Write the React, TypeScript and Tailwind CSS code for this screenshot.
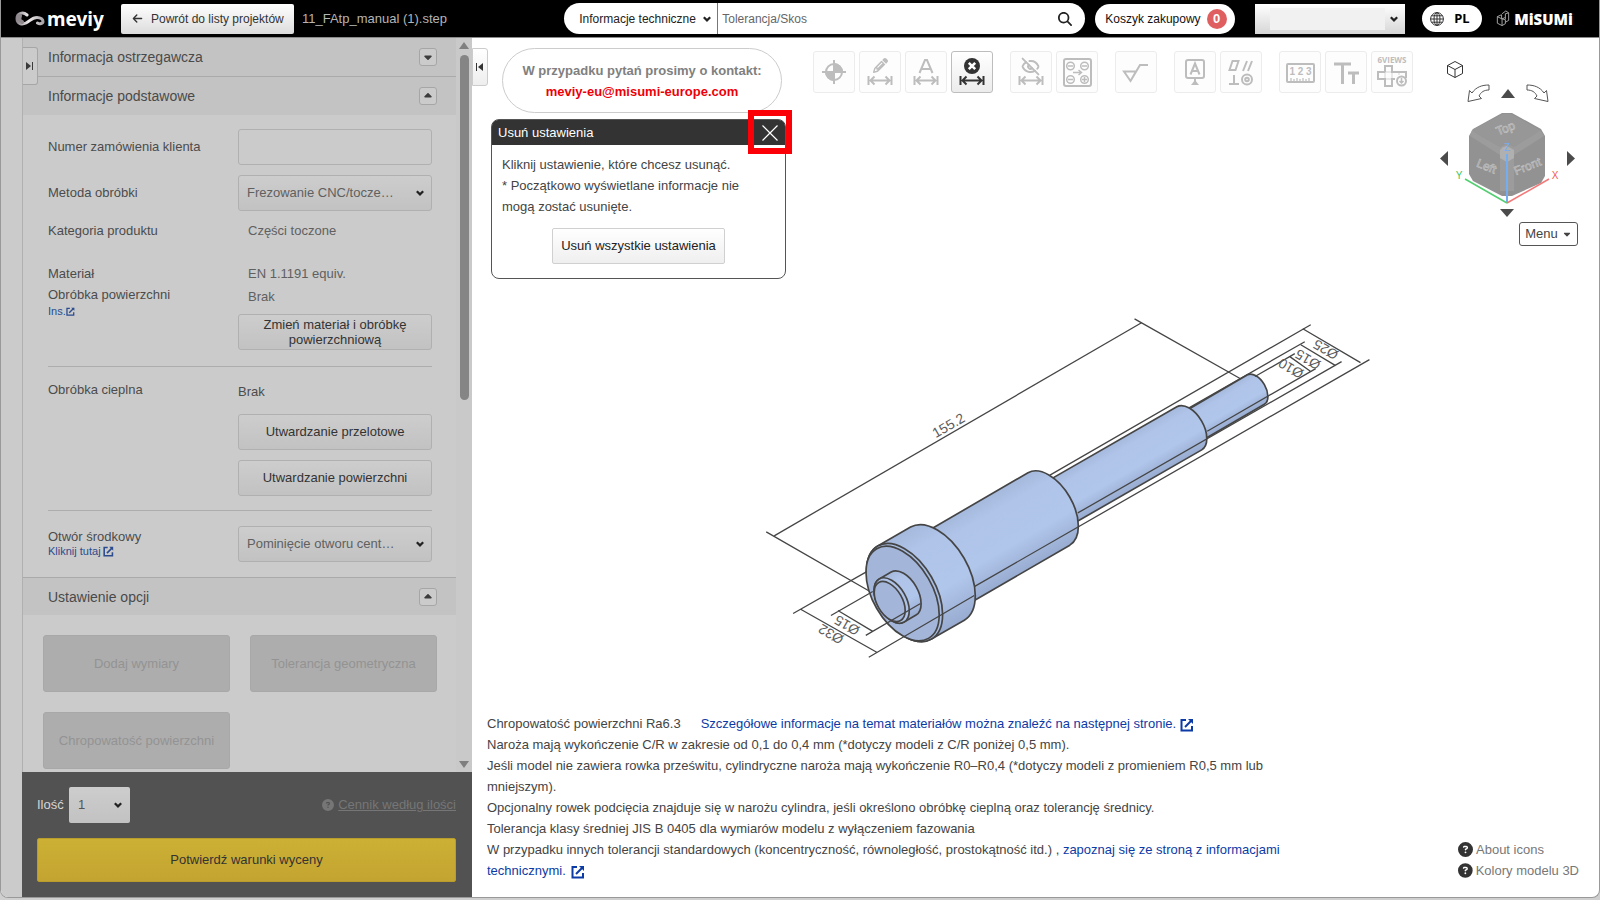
import { useState } from "react";
import type { ReactNode } from "react";
import clsx from "clsx";
import { EyeOff } from "lucide-react";
import {
  FaArrowLeft,
  FaCaretDown,
  FaCaretUp,
  FaCircleQuestion,
  FaMagnifyingGlass,
  FaPencil,
} from "react-icons/fa6";

const panelControl =
  "border border-[#b0b0b0] rounded-[3px] bg-linear-to-b from-[#cdcdcd] to-[#c2c2c2] text-[13px]";

function ExternalIcon({ className }: { className?: string }) {
  return (
    <svg viewBox="0 0 14 14" className={clsx("inline-block", className)} fill="none" stroke="currentColor" strokeWidth="2">
      <path d="M6 2H1.5v10.5H12V8" />
      <path d="M5 9l7-7" />
      <path d="M8 1h5v5z" fill="currentColor" stroke="none" />
    </svg>
  );
}

function Chevron({ className }: { className?: string }) {
  return (
    <svg viewBox="0 0 8 8" className={clsx("pointer-events-none absolute size-2", className)} fill="none" stroke="#222" strokeWidth="2.2">
      <path d="M.8 2.200L4 5.400l3.200-3.200" />
    </svg>
  );
}

/* ---------- Header ---------- */

function Header() {
  return (
    <header className="flex h-[38px] shrink-0 items-center border-b border-[#8a8a8a] bg-black pl-[14px] pr-[26px] text-xs">
      <a href="#" className="flex w-[92px] items-center text-white" aria-label="meviy">
        <svg viewBox="0 0 30 16" className="h-4 w-[30px] shrink-0" fill="none" strokeLinecap="round">
          <defs>
            <linearGradient id="loop" x1="0" x2="1">
              <stop offset="0" stopColor="#8d878d" />
              <stop offset="0.45" stopColor="#f2eef0" />
              <stop offset="1" stopColor="#a9a4a8" />
            </linearGradient>
          </defs>
          <path
            d="M12 4C8 .5 2 2 2 7.500S7 14 11 12C15 10 17 6.500 22 6.500c4 0 6 2 6 4s-3 3-5.500 1.500"
            stroke="url(#loop)"
            strokeWidth="3"
          />
          <path d="M5 5c-1 2-1 5 2 6" stroke="#8f898e" strokeWidth="4" />
        </svg>
        <span className="ml-[2px] font-['Noto_Sans'] text-[19px] leading-5 font-bold">meviy</span>
      </a>
      <button className="ml-[14px] flex h-[30px] w-[173px] shrink-0 items-center rounded-[2px] bg-linear-to-b from-white to-[#dcdcdc] pl-[11px] text-[#333]">
        <FaArrowLeft className="mr-2 size-[11px]" />
        Powrót do listy projektów
      </button>
      <span className="ml-2 text-[13px] whitespace-nowrap text-[#b5b5b5]">11_FAtp_manual (1).step</span>

      <div className="ml-auto flex h-[31px] w-[521px] items-center overflow-hidden rounded-full bg-white">
        <div className="relative flex h-full w-[154px] items-center border-r border-[#777]">
          <select aria-label="Kategoria wyszukiwania" className="h-full w-full appearance-none pl-[15px] text-[#222]">
            <option>Informacje techniczne</option>
          </select>
          <Chevron className="right-[6px]" />
        </div>
        <input aria-label="Szukaj" placeholder="Tolerancja/Skos" className="h-full flex-1 pl-1 placeholder-[#666] outline-none" />
        <button aria-label="Szukaj" className="mr-[13px]">
          <FaMagnifyingGlass className="size-[14px] text-[#222]" />
        </button>
      </div>

      <button className="ml-[10px] flex h-[30px] w-[140px] items-center gap-[6px] rounded-full bg-white pl-[10px] whitespace-nowrap text-[#111]">
        Koszyk zakupowy
        <span className="flex size-5 items-center justify-center rounded-full bg-[#df5f60] text-[13px] font-bold text-white">0</span>
      </button>

      <div className="relative ml-5 flex h-[30px] w-[150px] items-center bg-linear-to-b from-white to-[#d6d6d6] pl-[15px]">
        <span className="h-[22px] w-[115px] bg-[#f1f1f1]" />
        <select aria-label="Konto" className="absolute inset-0 appearance-none" />
        <Chevron className="right-[7px]" />
      </div>

      <button className="ml-[17px] flex h-[27px] w-[60px] items-center rounded-full bg-white pl-2 font-['Noto_Sans'] text-[13px] font-bold text-black">
        <svg viewBox="0 0 14 14" className="mr-[10px] size-[14px]" fill="none" stroke="#333" strokeWidth="1">
          <circle cx="7" cy="7" r="6.400" />
          <ellipse cx="7" cy="7" rx="3" ry="6.400" />
          <path d="M7 .5v13M.5 7h13M1.500 3.800h11M1.500 10.200h11" />
        </svg>
        PL
      </button>

      <a href="#" className="ml-[14px] flex items-center text-white" aria-label="MiSUMi">
        <svg viewBox="0 0 14 18" className="mr-1 h-[17px] w-[14px]" fill="none" stroke="#aaa" strokeWidth="1">
          <path d="M1 7l4.500-2v4l4 1.500v4L6 16.500 1 14zM1 7l5 2.500v7M6 9.500l3-1.500M6 4l4-3 3 2v8l-3.500 2M9.500 4l3.500-1M9.500 4v6" />
        </svg>
        <span className="font-['Open_Sans'] text-[15px] leading-5 font-extrabold">MiSUMi</span>
      </a>
    </header>
  );
}

/* ---------- Left panel ---------- */

function SectionHeader({ title, open, className }: { title: string; open: boolean; className?: string }) {
  const Caret = open ? FaCaretUp : FaCaretDown;
  return (
    <div className={clsx("flex items-center justify-between border-[#aaa] bg-[#c3c3c3] pr-[19px] pl-[25px]", className)}>
      <h2 className="text-sm text-[#4a4a4a]">{title}</h2>
      <button aria-label={title} className="flex size-[18px] items-center justify-center rounded-[3px] border border-[#a6a6a6] bg-[#cbcbcb] text-[#3c3c3c]">
        <Caret className="size-3" />
      </button>
    </div>
  );
}

function PanelSelect({ id, value }: { id: string; value: string }) {
  return (
    <div className="relative flex w-[194px] items-center">
      <select id={id} className={clsx(panelControl, "h-9 w-full appearance-none pl-2 text-[#606060]")}>
        <option>{value}</option>
      </select>
      <Chevron className="right-2" />
    </div>
  );
}

function OptionButton({ children }: { children: ReactNode }) {
  return (
    <button disabled className="h-[57px] w-[187px] rounded-[3px] border border-[#a8a8a8] bg-[#adadad] text-[13px] text-[#939393]">
      {children}
    </button>
  );
}

function Sidebar() {
  const [orderNo, setOrderNo] = useState("");

  return (
    <aside className="flex w-[471px] shrink-0 bg-[#cbcbcb] pl-[21px] text-[13px] text-[#4c4c4c]">
      <div className="flex min-w-0 flex-1 flex-col">
        <div className="flex min-h-0 flex-1 border-l border-[#b0b0b0]">
          <div className="relative min-w-0 flex-1 overflow-hidden">
            <SectionHeader title="Informacja ostrzegawcza" open={false} className="h-[39px] border-b" />
            <SectionHeader title="Informacje podstawowe" open className="h-[38px]" />
            <button aria-label="Rozwiń panel" className="absolute top-[9px] left-0 flex h-[38px] w-[15px] items-center justify-center rounded-r-[3px] border border-l-0 border-[#a6a6a6] bg-[#cbcbcb]">
              <svg viewBox="0 0 8 8" className="size-2" fill="#3a3a3a"><path d="M0 0l5 4-5 4zM6 0h1v8H6z" /></svg>
            </button>

            <div className="mr-6 ml-[25px] flex flex-col">
              <div className="mt-[14px] flex items-center justify-between">
                <label htmlFor="order">Numer zamówienia klienta</label>
                <input
                  id="order"
                  value={orderNo}
                  onChange={(e) => setOrderNo(e.target.value)}
                  className="h-9 w-[194px] rounded-[3px] border border-[#b0b0b0] px-2"
                />
              </div>
              <div className="mt-[10px] flex items-center justify-between">
                <label htmlFor="method">Metoda obróbki</label>
                <PanelSelect id="method" value="Frezowanie CNC/tocze…" />
              </div>
              <div className="mt-[10px] flex h-5 items-center">
                <span className="w-[200px]">Kategoria produktu</span>
                <span className="text-[#606060]">Części toczone</span>
              </div>
              <div className="mt-[23px] flex h-5 items-center">
                <span className="w-[200px]">Materiał</span>
                <span className="text-[#606060]">EN 1.1191 equiv.</span>
              </div>
              <div className="mt-[2px] flex items-start justify-between">
                <div className="flex flex-col">
                  <span className="leading-[18px]">Obróbka powierzchni</span>
                  <a href="#" className="flex items-center text-[11px] leading-[14px] text-[#2b4b8e]">
                    Ins.<ExternalIcon className="size-[9px]" />
                  </a>
                </div>
                <div className="flex w-[194px] flex-col">
                  <span className="pl-[10px] leading-[22px] text-[#606060]">Brak</span>
                  <button className={clsx(panelControl, "mt-[6px] h-9 leading-[15px] text-[#333]")}>
                    Zmień materiał i obróbkę
                    <br />
                    powierzchniową
                  </button>
                </div>
              </div>

              <hr className="mt-4 border-[#adadad]" />

              <div className="mt-[15px] flex items-start justify-between">
                <span className="leading-4">Obróbka cieplna</span>
                <div className="flex w-[194px] flex-col">
                  <span className="leading-5">Brak</span>
                  <button className={clsx(panelControl, "mt-3 h-9 text-[#333]")}>Utwardzanie przelotowe</button>
                  <button className={clsx(panelControl, "mt-[10px] h-9 text-[#333]")}>Utwardzanie powierzchni</button>
                </div>
              </div>

              <hr className="mt-[14px] border-[#adadad]" />

              <div className="mt-[15px] mb-[15px] flex items-center justify-between">
                <div className="flex flex-col">
                  <label htmlFor="centre" className="leading-[14px]">Otwór środkowy</label>
                  <a href="#" className="flex items-center gap-[2px] text-[11px] leading-[14px] text-[#2b4b8e]">
                    Kliknij tutaj<ExternalIcon className="size-[11px]" />
                  </a>
                </div>
                <PanelSelect id="centre" value="Pominięcie otworu cent…" />
              </div>
            </div>

            <SectionHeader title="Ustawienie opcji" open className="h-[38px] border-t" />
            <div className="flex flex-wrap gap-x-5 gap-y-5 pt-5 pl-5">
              <OptionButton>Dodaj wymiary</OptionButton>
              <OptionButton>Tolerancja geometryczna</OptionButton>
              <OptionButton>Chropowatość powierzchni</OptionButton>
            </div>
          </div>

          {/* Scrollbar */}
          <div className="flex w-4 shrink-0 flex-col items-center bg-[#c9c9c9] py-1">
            <svg viewBox="0 0 10 7" className="h-[7px] w-[10px]" fill="#7f7f7f"><path d="M5 0l5 7H0z" /></svg>
            <div className="mt-[6px] h-[345px] w-[9px] rounded-full bg-[#858585]" />
            <svg viewBox="0 0 10 7" className="mt-auto h-[7px] w-[10px]" fill="#7f7f7f"><path d="M0 0h10L5 7z" /></svg>
          </div>
        </div>

        <div className="bg-[#525252] pt-[15px] pr-4 pb-[15px] pl-[15px]">
          <div className="flex items-center">
            <label htmlFor="qty" className="w-8 text-[#d6d6d6]">Ilość</label>
            <div className="relative flex items-center">
              <select id="qty" className="h-9 w-[61px] appearance-none rounded-[2px] bg-linear-to-b from-[#cdcdcd] to-[#c2c2c2] pl-[9px] text-[#555]">
                <option>1</option>
              </select>
              <Chevron className="right-2" />
            </div>
            <a href="#" className="ml-auto flex items-center gap-1 text-[#767676]">
              <FaCircleQuestion className="size-3" />
              <span className="underline">Cennik według ilości</span>
            </a>
          </div>
          <button className="mt-[15px] h-11 w-full rounded-[2px] border border-[#b89c2c] bg-linear-to-b from-[#ccb034] to-[#c3a431] text-[#333]">
            Potwierdź warunki wyceny
          </button>
        </div>
      </div>
    </aside>
  );
}

/* ---------- Toolbar ---------- */

function Tool({ label, active, children }: { label: string; active?: boolean; children: ReactNode }) {
  return (
    <button
      aria-label={label}
      className={clsx(
        "size-[42px] rounded-[3px] border",
        active ? "border-[#bdbdbd] bg-linear-to-b from-white to-[#ececec] text-[#333]" : "border-[#ececec] bg-[#fdfdfd] text-[#bdbdbd]",
      )}
    >
      <svg viewBox="1 1 40 40" className="size-10" fill="none" stroke="currentColor" strokeWidth="2">
        {children}
      </svg>
    </button>
  );
}

const DimensionArrow = () => <path d="M9.500 25v9M32.500 25v9M11 29.500h20M15.500 25.500l-4 4 4 4M26.500 25.500l4 4-4 4" />;

function Toolbar() {
  return (
    <div className="ml-[27px] flex gap-[17px] pt-[3px]">
      <div className="flex gap-1">
        <Tool label="Punkt odniesienia">
          <circle cx="21" cy="21" r="8" />
          <path d="M21 21V13a8 8 0 0 1 8 8zM21 21v8a8 8 0 0 1-8-8z" fill="currentColor" />
          <path d="M21 9v24M9 21h24" />
        </Tool>
        <Tool label="Edytuj wymiar">
          <FaPencil x="14" y="7" size={15} stroke="none" fill="currentColor" />
          <DimensionArrow />
        </Tool>
        <Tool label="Tekst wymiaru">
          <path d="M14.500 22L20 9h2l5.500 13M17 18h8" />
          <DimensionArrow />
        </Tool>
        <Tool label="Usuń ustawienia" active>
          <circle cx="21" cy="15" r="8" fill="currentColor" stroke="none" />
          <path d="M17.800 11.800l6.400 6.400M24.200 11.800l-6.400 6.400" stroke="#fff" strokeWidth="2.600" />
          <DimensionArrow />
        </Tool>
      </div>
      <div className="flex gap-1">
        <Tool label="Ukryj wymiary">
          <EyeOff x="11" y="6" size={19} strokeWidth={2.4} />
          <DimensionArrow />
        </Tool>
        <Tool label="Grupuj otwory">
          <rect x="8" y="8" width="27" height="27" rx="2" />
          <circle cx="14.500" cy="15" r="3.800" strokeWidth="1.500" />
          <circle cx="28.500" cy="15" r="3.800" strokeWidth="1.500" />
          <circle cx="14.500" cy="28.500" r="3.800" strokeWidth="1.500" />
          <circle cx="28.500" cy="28.500" r="3.800" strokeWidth="1.500" />
          <path d="M12 15h5M26 15h5M12 28.500h5M26 28.500h5M28.500 26v5M17 21.500h8M22.500 19l3 2.500-3 2.500" strokeWidth="1.500" />
        </Tool>
      </div>
      <Tool label="Chropowatość">
        <path d="M9 20.500h12L15.500 30zM15.500 30l9.500-16h8" />
      </Tool>
      <div className="flex gap-1">
        <Tool label="Baza">
          <rect x="12" y="9" width="18" height="18" rx="2" />
          <path d="M16.500 23.500L21 12.500l4.500 11M18 20h6M21 27v5" />
          <path d="M17 34l4-5 4 5z" fill="currentColor" stroke="none" />
        </Tool>
        <Tool label="Tolerancja geometryczna">
          <path d="M9.500 19l3-9h6l-3 9zM23 20l4-10M28 20l4-10M9 33h10M14 24v9" />
          <circle cx="27" cy="28.500" r="5" />
          <circle cx="27" cy="28.500" r="1.800" />
        </Tool>
      </div>
      <div className="flex gap-1">
        <Tool label="Wymiary liczbowe">
          <rect x="8" y="13" width="27" height="18" rx="1" />
          <text x="21.500" y="24" textAnchor="middle" fontSize="10" fontWeight="bold" fill="currentColor" stroke="none">1 2 3</text>
          <path d="M12 30v-3M15 30v-2M18 30v-3M21 30v-2M24 30v-3M27 30v-2M30 30v-3" strokeWidth="1.200" />
        </Tool>
        <Tool label="Rozmiar tekstu">
          <path d="M9 13h17M17.500 13v20M23 22h11M28.500 22v11" strokeWidth="3" />
        </Tool>
        <Tool label="Sześć widoków">
          <text x="21" y="12" textAnchor="middle" fontSize="8" fontWeight="bold" fill="currentColor" stroke="none" className="font-['Open_Sans']">6VIEWS</text>
          <path d="M14 21v-6h7v6h14v6M24 28h-3v7h-7v-7H7v-7h7" />
          <path d="M14 21h7v7h-7zM28 21v3" strokeWidth="0.600" />
          <circle cx="30.500" cy="30" r="4.500" />
          <path d="M30.500 27v4M28.500 30l2 2 2-2" strokeWidth="1.500" />
        </Tool>
      </div>
    </div>
  );
}

/* ---------- View cube ---------- */

function Triangle({ label, d, className }: { label: string; d: string; className: string }) {
  return (
    <button aria-label={label}>
      <svg viewBox="0 0 16 16" preserveAspectRatio="none" className={className} fill="#4b4b4b"><path d={d} /></svg>
    </button>
  );
}

function ViewCube() {
  return (
    <nav className="mr-[21px] ml-auto flex w-[138px] flex-col pt-3">
      <button aria-label="Widok izometryczny" className="ml-[6px] size-[18px]">
        <svg viewBox="0 0 18 18" className="size-[18px]" fill="none" stroke="#333" strokeWidth="1">
          <path d="M9 1.500l7.500 4v8L9 17.500l-7.500-4v-8zM1.500 5.500L9 9.500l7.500-4M9 9.500v8" />
        </svg>
      </button>
      <div className="mt-[6px] flex items-center gap-[11px] pl-[27px]">
        <button aria-label="Obróć w lewo">
          <svg viewBox="0 0 23 18" className="h-[18px] w-[23px]" fill="none" stroke="#555">
            <path d="M22 1v5c-5 0-8 2-10 6l2.500 2.500L1 17.500 2.500 6.500 5 9C9 3 15 1 22 1z" />
          </svg>
        </button>
        <Triangle label="W górę" d="M8 0l8 16H0z" className="h-[9px] w-[14px]" />
        <button aria-label="Obróć w prawo">
          <svg viewBox="0 0 23 18" className="h-[18px] w-[23px]" fill="none" stroke="#555">
            <path d="M1 1v5c5 0 8 2 10 6l-2.500 2.500L22 17.500 20.500 6.500 18 9C14 3 8 1 1 1z" />
          </svg>
        </button>
      </div>
      <div className="mt-2 mr-[3px] flex items-center justify-between">
        <Triangle label="W lewo" d="M16 0v16L0 8z" className="h-[15px] w-2" />
        <svg viewBox="1456 110 106 96" className="h-[96px] w-[106px]">
          <path d="M1503 113h10l29 16 4 7v40l-4 7-29 13h-10l-29-15-4-7v-38l4-7z" fill="#929292" />
          <path d="M1504 114h8l29 16-5 4-21 13-7-4-7 4-23-13-5-4z" fill="#979797" />
          <path d="M1473 130l5 4 23 13 7-4 7 4 21-13 5-4 4 6-30 19v36h-14v-36l-30-19z" fill="#9c9c9c" />
          <path d="M1504 147l4-1 7 4v8l-7 4-7-4v-8z" fill="#b0b0b0" />
          <g fill="none" stroke="#c2c2c2" strokeWidth="0.600" fontSize="12" textAnchor="middle">
            <text transform="translate(1508 132) rotate(-22)">Top</text>
            <text transform="translate(1486 170) rotate(22)">Left</text>
            <text transform="translate(1530 170) rotate(-22)">Front</text>
          </g>
          <path d="M1508 203v-49" stroke="#74aef0" strokeWidth="2" />
          <path d="M1508 203l-42-24" stroke="#52cf70" strokeWidth="1.500" />
          <path d="M1508 203l42-24" stroke="#f47878" strokeWidth="1.500" />
          <g fontSize="10" textAnchor="middle">
            <text x="1508" y="151" fill="#74aef0">Z</text>
            <text x="1460" y="179" fill="#3cc75e">Y</text>
            <text x="1556" y="179" fill="#f25c5c">X</text>
          </g>
        </svg>
        <Triangle label="W prawo" d="M0 0l16 8L0 16z" className="h-[15px] w-2" />
      </div>
      <div className="mt-[3px] mr-1 flex h-2 justify-center">
        <Triangle label="W dół" d="M0 0h16L8 16z" className="block h-2 w-[14px]" />
      </div>
      <button className="mt-[5px] ml-auto flex h-6 w-[59px] items-center justify-center gap-1 rounded-[3px] border border-[#555] text-[13px] text-[#444]">
        Menu <FaCaretDown className="size-[10px]" />
      </button>
    </nav>
  );
}

/* ---------- Turned part drawing ---------- */

// The axis runs at -30deg; an end circle of semi-axis a appears as an
// ellipse (a, a / sqrt 3) turned by 60deg.
const flat = (a: number) => a * 0.577;

function Cylinder({ from, to, a }: { from: number[]; to: number[]; a: number }) {
  const dx = a * 0.5;
  const dy = a * 0.866;
  const b = flat(a);
  const d = `M${to[0] + dx} ${to[1] + dy}A${a} ${b} 60 0 0 ${to[0] - dx} ${to[1] - dy}L${from[0] - dx} ${from[1] - dy}A${a} ${b} 60 0 0 ${from[0] + dx} ${from[1] + dy}Z`;
  const id = `shade-${a}-${from[0]}`;
  return (
    <>
      <linearGradient id={id} gradientUnits="userSpaceOnUse" x1={from[0] - dx} y1={from[1] - dy} x2={from[0] + dx} y2={from[1] + dy}>
        <stop offset="0" stopColor="#a5b9dd" />
        <stop offset="0.2" stopColor="#afc4e8" />
        <stop offset="0.65" stopColor="#b0c6ea" />
        <stop offset="1" stopColor="#98abd0" />
      </linearGradient>
      <path d={d} fill={`url(#${id})`} />
    </>
  );
}

function Disc({ at, a, fill }: { at: number[]; a: number; fill: string }) {
  return <ellipse rx={a} ry={flat(a)} fill={fill} transform={`translate(${at[0]} ${at[1]}) rotate(60)`} />;
}

const dimensionLabels = [
  { text: "155.2", x: 948, y: 426, angle: -30 },
  { text: "Ø25", x: 1327, y: 350, angle: 210 },
  { text: "Ø15", x: 1309, y: 360, angle: 210 },
  { text: "Ø10", x: 1292, y: 369, angle: 210 },
  { text: "Ø15", x: 846, y: 627, angle: 210 },
  { text: "Ø32", x: 830, y: 636, angle: 210 },
];

function PartDrawing() {
  return (
    <svg viewBox="472 279 1127 436" className="min-h-0 w-full flex-1" role="img" aria-label="Model 3D">
      <g stroke="#454545" strokeWidth="1.700" strokeLinejoin="round">
        <path d="M871 594L765 533M1241 379L1135 319M1306 342L1180 414M1312 325L1050 476" fill="none" strokeWidth="1.300" />
        <Cylinder from={[1190, 429]} to={[1257, 390]} a={17} />
        <Cylinder from={[1049, 510]} to={[1190, 429]} a={25} />
        <Cylinder from={[937, 575]} to={[1049, 510]} a={42} />
        <Cylinder from={[904, 594]} to={[937, 575]} a={54} />
        <Disc at={[904, 594]} a={54} fill="#a9bde1" />
        <Disc at={[902, 595]} a={52} fill="#a3b6da" />
        <Cylinder from={[891, 602]} to={[903, 595]} a={25} />
        <Disc at={[891, 602]} a={25} fill="#aec3e7" />
        <Disc at={[889, 603]} a={22} fill="#a3b6da" />
      </g>
      <g stroke="#454545" strokeWidth="1.300" fill="none">
        <path d="M773 537L1142 323" />
        <path d="M1304 329L1362 363M1371 360L974 588" />
        <path d="M1302 345L1337 366M1343 362L1078 514" />
        <path d="M1291 357L1312 372M1296 354L1256 377M1317 369L1208 432" />
        <path d="M800 611L876 654M792 615L866 573M868 659L974 597" />
        <path d="M837 612L872 633M830 617L872 593M865 637L920 605" />
      </g>
      <g fill="#5c5c5c" fontSize="14" textAnchor="middle">
        {dimensionLabels.map((l) => (
          <text key={`${l.text}-${l.x}`} dy="5" transform={`translate(${l.x} ${l.y}) rotate(${l.angle})`}>
            {l.text}
          </text>
        ))}
      </g>
    </svg>
  );
}

/* ---------- Viewer ---------- */

function DeleteDialog({ onClose }: { onClose: () => void }) {
  return (
    <div role="dialog" aria-labelledby="dialog-title" className="relative mt-[6px] h-[160px] rounded-lg border border-[#555] bg-white text-[13px] text-[#444]">
      <div className="flex h-[25px] items-center justify-between rounded-t-[6px] bg-[#333] pr-[7px] pl-[6px]">
        <h2 id="dialog-title" className="text-white">Usuń ustawienia</h2>
        <button aria-label="Zamknij" onClick={onClose}>
          <svg viewBox="0 0 16 16" className="size-4" stroke="#fff" strokeWidth="1.200"><path d="M.5.5l15 15M15.500.5l-15 15" /></svg>
        </button>
      </div>
      <p className="pt-[9px] pr-8 pl-[10px] leading-[21px]">
        Kliknij ustawienie, które chcesz usunąć.
        <br />* Początkowo wyświetlane informacje nie mogą zostać usunięte.
      </p>
      <button className="mx-auto mt-[11px] block h-9 w-[173px] rounded-[2px] border border-[#d0d0d0] bg-linear-to-b from-white to-[#efefef] text-[#222]">
        Usuń wszystkie ustawienia
      </button>
      <div className="pointer-events-none absolute -top-[10px] -right-[7px] size-11 border-6 border-[#fb0007]" />
    </div>
  );
}

function Notes() {
  return (
    <footer className="flex shrink-0 items-end justify-between pr-5 pb-4 pl-[15px] text-[13px]">
      <div className="w-[800px] leading-[21px] text-[#444]">
        <p>
          <span className="mr-5">Chropowatość powierzchni Ra6.3</span>
          <a href="#" className="text-[#0c3ba5]">
            Szczegółowe informacje na temat materiałów można znaleźć na następnej stronie. <ExternalIcon className="size-[14px]" />
          </a>
        </p>
        <p>Naroża mają wykończenie C/R w zakresie od 0,1 do 0,4 mm (*dotyczy modeli z C/R poniżej 0,5 mm).</p>
        <p>Jeśli model nie zawiera rowka prześwitu, cylindryczne naroża mają wykończenie R0–R0,4 (*dotyczy modeli z promieniem R0,5 mm lub mniejszym).</p>
        <p>Opcjonalny rowek podcięcia znajduje się w narożu cylindra, jeśli określono obróbkę cieplną oraz tolerancję średnicy.</p>
        <p>Tolerancja klasy średniej JIS B 0405 dla wymiarów modelu z wyłączeniem fazowania</p>
        <p>
          W przypadku innych tolerancji standardowych (koncentryczność, równoległość, prostokątność itd.) ,{" "}
          <a href="#" className="text-[#0c3ba5]">
            zapoznaj się ze stroną z informacjami technicznymi. <ExternalIcon className="ml-[2px] size-[14px]" />
          </a>
        </p>
      </div>
      <ul className="w-[121px] leading-[21px] whitespace-nowrap text-[#777]">
        {["About icons", "Kolory modelu 3D"].map((item) => (
          <li key={item}>
            <a href="#" className="flex items-center gap-[3px]">
              <FaCircleQuestion className="size-[15px] text-[#333]" />
              {item}
            </a>
          </li>
        ))}
      </ul>
    </footer>
  );
}

export default function App() {
  const [dialogOpen, setDialogOpen] = useState(true);

  return (
    <div className="h-screen bg-[#cfcfcf] pb-[2px] font-['Liberation_Sans',Arial,sans-serif]">
      <div className="flex h-full flex-col overflow-hidden rounded-b-lg border-x border-b border-[#999] bg-white">
        <Header />
        <div className="flex min-h-0 flex-1">
          <Sidebar />
          <main className="flex min-w-0 flex-1 flex-col">
            <div className="flex items-start pt-[10px]">
              <button aria-label="Zwiń panel" className="flex h-[38px] w-4 items-center justify-center rounded-r-[3px] border border-[#ccc] bg-linear-to-b from-white to-[#eee]">
                <svg viewBox="0 0 8 8" className="size-2" fill="#333"><path d="M7 0v8L2 4zM0 0h1v8H0z" /></svg>
              </button>
              <div className="ml-[3px] flex w-[295px] shrink-0 flex-col">
                <div className="ml-[11px] flex h-[65px] w-[280px] flex-col items-center justify-center rounded-full border border-[#ccc] text-[13px] leading-[21px] font-bold whitespace-nowrap">
                  <span className="text-[#808080]">W przypadku pytań prosimy o kontakt:</span>
                  <a href="mailto:meviy-eu@misumi-europe.com" className="text-[#ee0008]">meviy-eu@misumi-europe.com</a>
                </div>
                {dialogOpen && <DeleteDialog onClose={() => setDialogOpen(false)} />}
              </div>
              <Toolbar />
              <ViewCube />
            </div>
            <PartDrawing />
            <Notes />
          </main>
        </div>
      </div>
    </div>
  );
}
